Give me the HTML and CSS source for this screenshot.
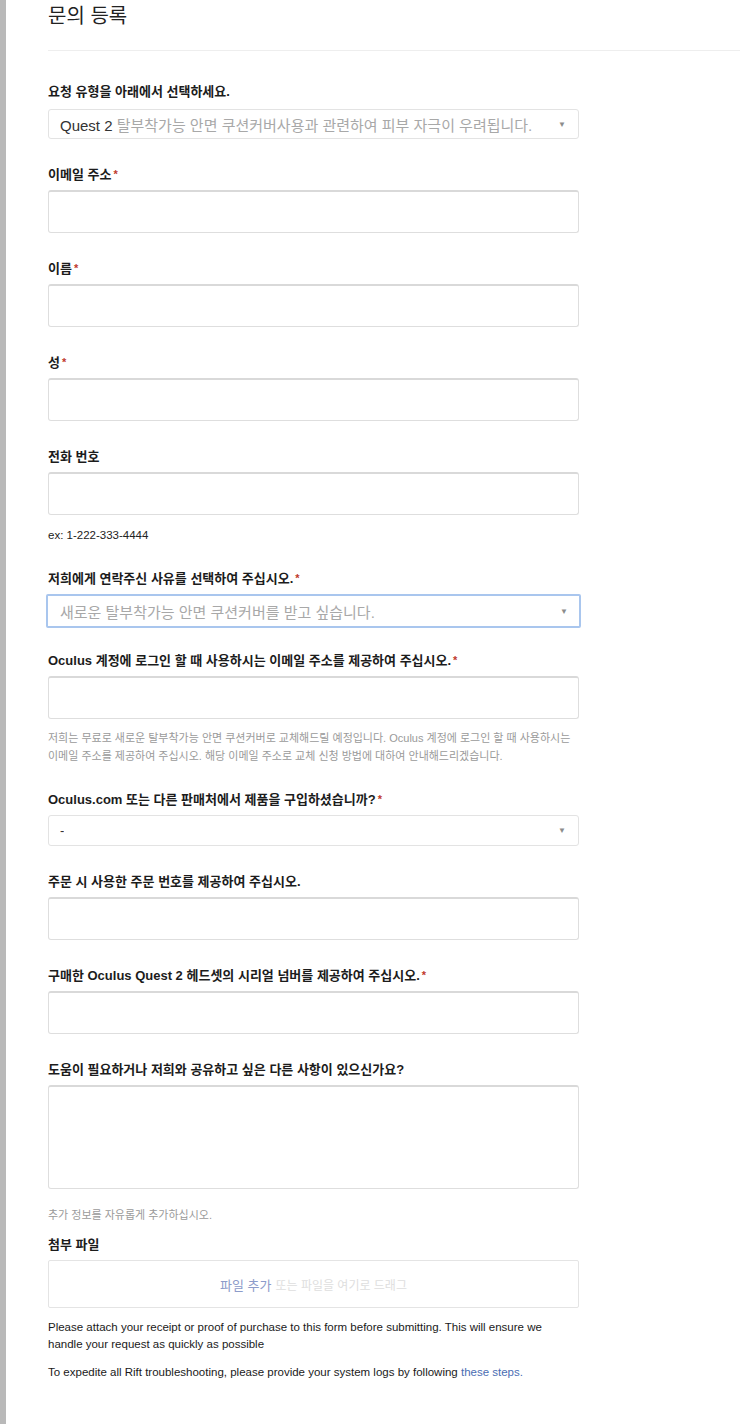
FILE: index.html
```html
<!DOCTYPE html>
<html lang="ko">
<head>
<meta charset="utf-8">
<title>문의 등록</title>
<link rel="stylesheet" href="styles.css">
</head>
<body>
<div class="page">
  <header class="page-header">
    <h1 class="title">문의 등록</h1>
  </header>
  <form class="form">
    <div class="field field-first">
      <label class="label">요청 유형을 아래에서 선택하세요.</label>
      <div class="select">
        <span class="select-text"><span class="dark">Quest 2</span> 탈부착가능 안면 쿠션커버사용과 관련하여 피부 자극이 우려됩니다.</span>
        <span class="arrow">▼</span>
      </div>
    </div>
    <div class="field">
      <label class="label">이메일 주소<span class="req">*</span></label>
      <div class="input"></div>
    </div>
    <div class="field">
      <label class="label">이름<span class="req">*</span></label>
      <div class="input"></div>
    </div>
    <div class="field">
      <label class="label">성<span class="req">*</span></label>
      <div class="input"></div>
    </div>
    <div class="field field-help">
      <label class="label">전화 번호</label>
      <div class="input"></div>
      <p class="hint-dark">ex: 1-222-333-4444</p>
    </div>
    <div class="field field-focus">
      <label class="label">저희에게 연락주신 사유를 선택하여 주십시오.<span class="req">*</span></label>
      <div class="select select-focus">
        <span class="select-text">새로운 탈부착가능 안면 쿠션커버를 받고 싶습니다.</span>
        <span class="arrow">▼</span>
      </div>
    </div>
    <div class="field field-account">
      <label class="label">Oculus 계정에 로그인 할 때 사용하시는 이메일 주소를 제공하여 주십시오.<span class="req">*</span></label>
      <div class="input"></div>
      <p class="hint hint-account">저희는 무료로 새로운 탈부착가능 안면 쿠션커버로 교체해드릴 예정입니다. Oculus 계정에 로그인 할 때 사용하시는 이메일 주소를 제공하여 주십시오. 해당 이메일 주소로 교체 신청 방법에 대하여 안내해드리겠습니다.</p>
    </div>
    <div class="field">
      <label class="label">Oculus.com 또는 다른 판매처에서 제품을 구입하셨습니까?<span class="req">*</span></label>
      <div class="select select-plain">
        <span class="select-text"><span class="dark">-</span></span>
        <span class="arrow">▼</span>
      </div>
    </div>
    <div class="field">
      <label class="label">주문 시 사용한 주문 번호를 제공하여 주십시오.</label>
      <div class="input"></div>
    </div>
    <div class="field">
      <label class="label">구매한 Oculus Quest 2 헤드셋의 시리얼 넘버를 제공하여 주십시오.<span class="req">*</span></label>
      <div class="input"></div>
    </div>
    <div class="field field-textarea">
      <label class="label">도움이 필요하거나 저희와 공유하고 싶은 다른 사항이 있으신가요?</label>
      <div class="input textarea"></div>
      <p class="hint hint-area">추가 정보를 자유롭게 추가하십시오.</p>
    </div>
    <div class="field field-attach">
      <label class="label">첨부 파일</label>
      <div class="dropzone"><span class="add">파일 추가</span><span class="drag">또는 파일을 여기로 드래그</span></div>
    </div>
    <p class="note">Please attach your receipt or proof of purchase to this form before submitting. This will ensure we handle your request as quickly as possible</p>
    <p class="note note-2">To expedite all Rift troubleshooting, please provide your system logs by following <a class="link" href="#">these steps.</a></p>
  </form>
</div>
</body>
</html>
```

FILE: styles.css
```css
html, body {
  margin: 0;
  padding: 0;
  background: #fff;
}
body {
  font-family: "Liberation Sans", "Noto Sans CJK KR", sans-serif;
  color: #222;
}
.page {
  min-height: 1424px;
  border-left: 6px solid #b9b9b9;
  box-sizing: border-box;
}
.page-header {
  margin-left: 42px;
  padding-top: 2px;
  height: 48px;
  border-bottom: 1px solid #eeeeee;
}
.title {
  margin: 0;
  font-family: "Noto Sans CJK KR", sans-serif;
  font-weight: 400;
  font-size: 20px;
  line-height: 26px;
  color: #222;
}
.form {
  padding-left: 42px;
  width: 531px;
  padding-top: 32px;
}
.field {
  margin-bottom: 27px;
}
.label {
  display: block;
  font-family: "Liberation Sans", "Noto Sans CJK KR", sans-serif;
  font-weight: 700;
  font-size: 13px;
  line-height: 18px;
  color: #1c1c1c;
  margin-bottom: 6px;
}
.field-first .label {
  margin-bottom: 8px;
}
.req {
  color: #c0392b;
  margin-left: 2px;
  font-size: 11px;
  vertical-align: top;
  position: relative;
  top: -1px;
}
.input {
  box-sizing: border-box;
  height: 43px;
  border: 1px solid #dedede;
  border-top: 2px solid #d9d9d9;
  border-radius: 3px;
  background: #fff;
}
.textarea {
  height: 104px;
}
.select {
  box-sizing: border-box;
  height: 30px;
  border: 1px solid #e3e3e3;
  border-radius: 3px;
  display: flex;
  align-items: center;
  justify-content: space-between;
  padding: 0 12px 0 11px;
}
.select-text {
  font-family: "Liberation Sans", "Noto Sans CJK KR", sans-serif;
  font-size: 15px;
  color: #a8a8a8;
  white-space: nowrap;
  overflow: hidden;
}
.dark {
  color: #333;
}
.arrow {
  font-size: 8px;
  color: #8c8c8c;
}
.select-focus {
  height: 34px;
  margin-left: -2px;
  margin-right: -2px;
  border: 2px solid #a9c6ee;
  border-radius: 2px;
  padding-left: 12px;
  padding-right: 11px;
}
.field-focus {
  margin-bottom: 24px;
}
.select-plain {
  height: 31px;
}
.select-plain .select-text {
  font-size: 13px;
}
.hint-dark {
  margin: 13px 0 0;
  font-size: 11.5px;
  line-height: 14px;
  color: #222;
}
.field-help {
  margin-bottom: 28px;
}
.field-account {
  margin-bottom: 26px;
}
.hint {
  margin: 11px 0 0;
  font-size: 11px;
  line-height: 18px;
  color: #9a9a9a;
  font-family: "Liberation Sans", "Noto Sans CJK KR", sans-serif;
}
.hint-account {
  margin-top: 10px;
}
.hint-area {
  margin-top: 17px;
}
.field-textarea {
  margin-bottom: 12px;
}
.dropzone {
  box-sizing: border-box;
  height: 48px;
  border: 1px solid #e4e4e4;
  border-radius: 2px;
  display: flex;
  align-items: center;
  justify-content: center;
  font-size: 13px;
}
.add {
  color: #8c9bc9;
}
.drag {
  color: #dedede;
  font-size: 12px;
  margin-left: 4px;
}
.field-attach {
  margin-bottom: 11px;
}
.note {
  margin: 0;
  font-size: 11.5px;
  line-height: 17px;
  color: #1a1a1a;
  width: 520px;
}
.note-2 {
  margin-top: 11px;
}
.link {
  color: #4a6db3;
  text-decoration: none;
}
```
